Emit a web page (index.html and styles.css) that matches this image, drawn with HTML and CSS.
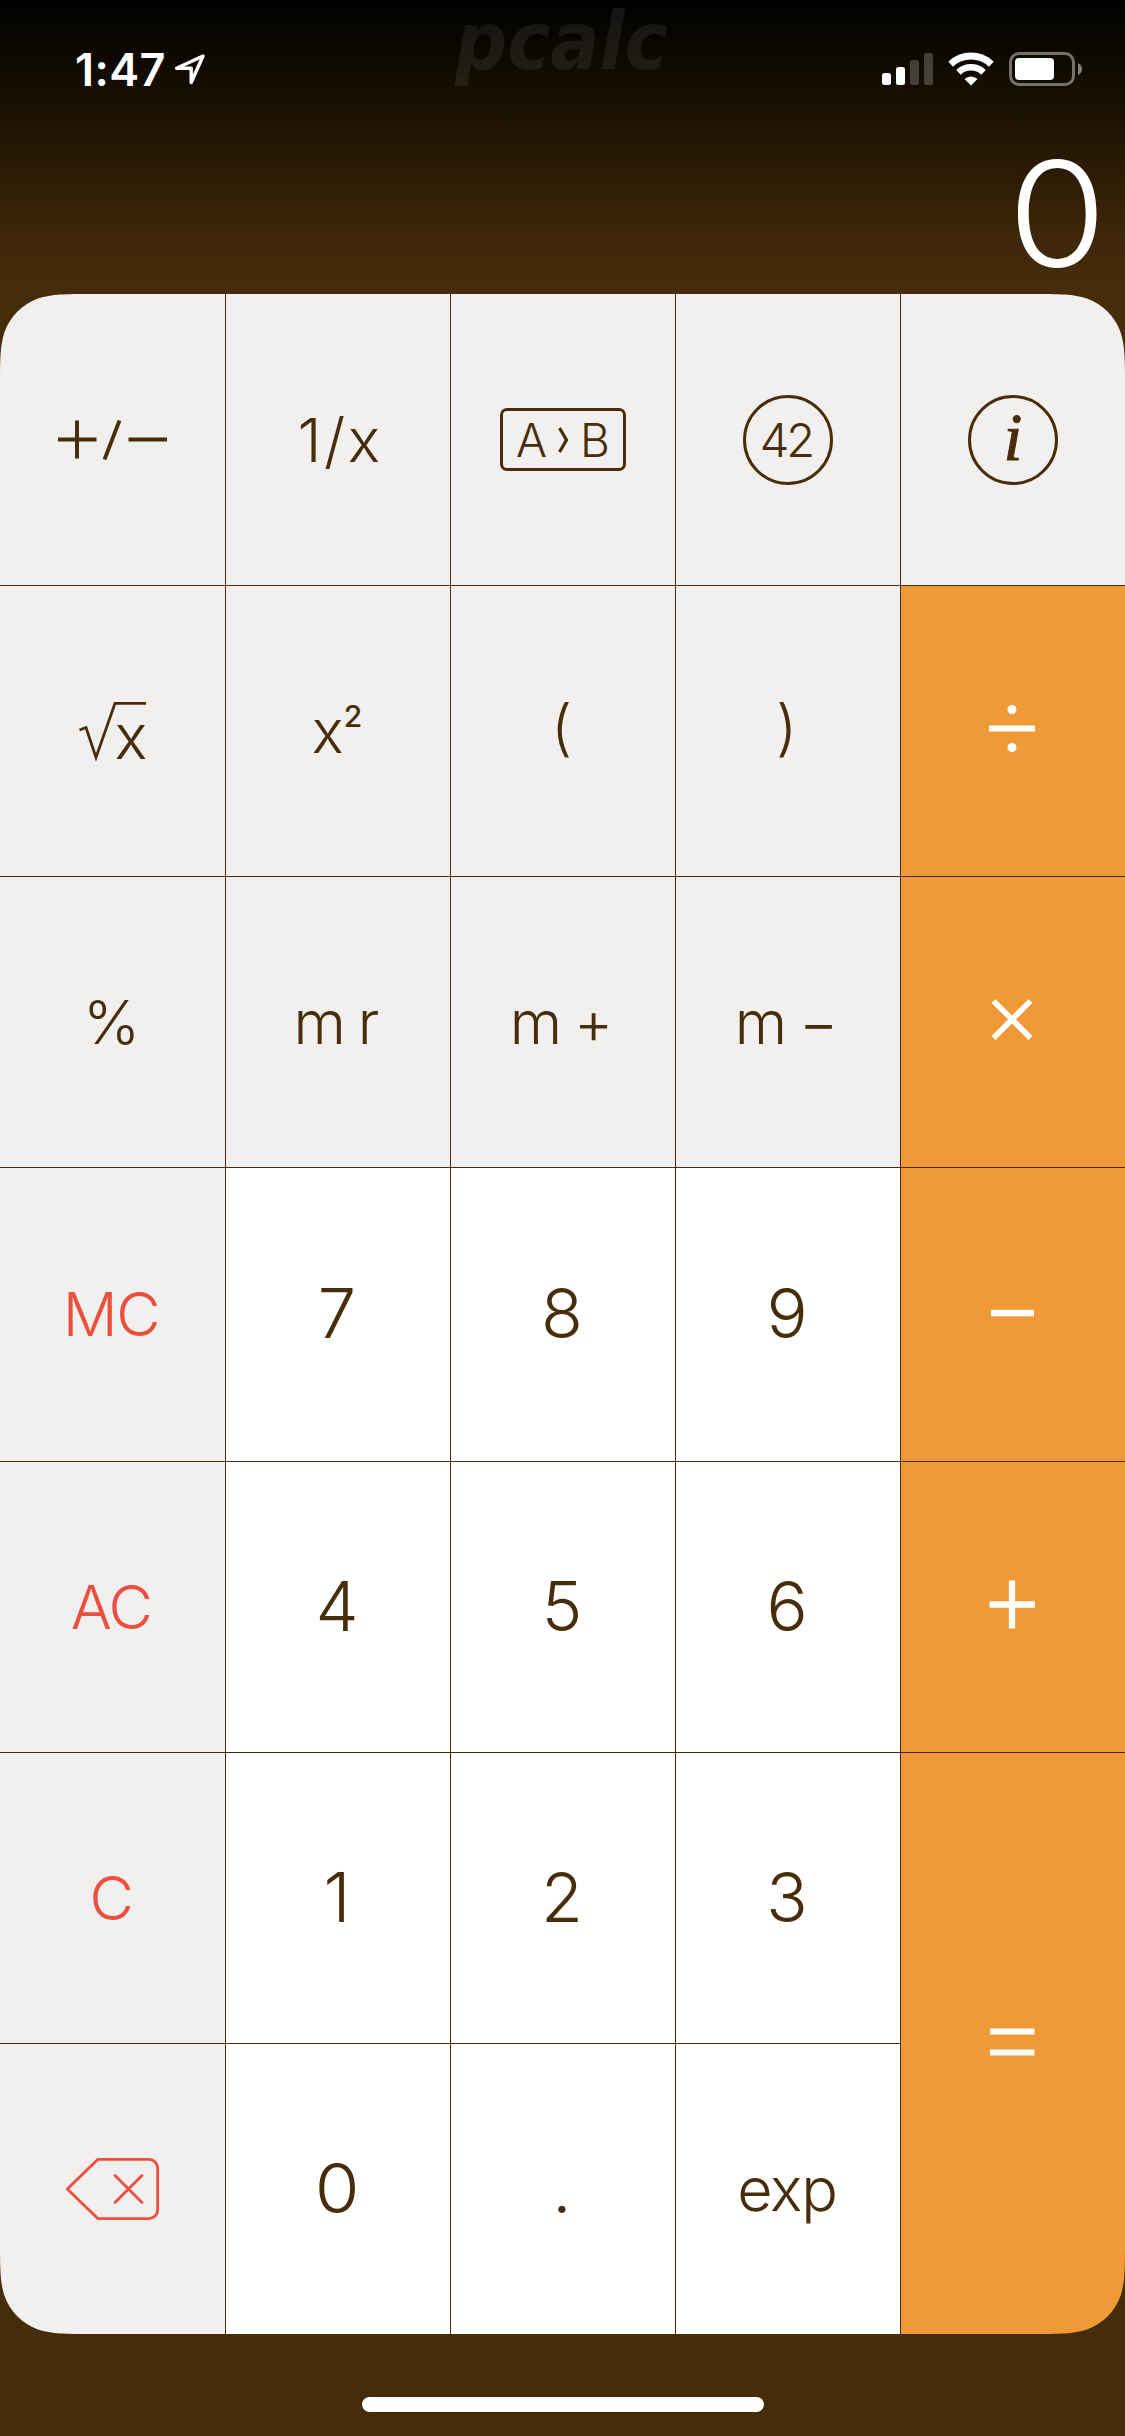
FILE: index.html
```html
<!DOCTYPE html>
<html lang="en">
<head>
<meta charset="utf-8">
<title>PCalc</title>
<link rel="stylesheet" href="styles.css">
</head>
<body>
<div class="screen">
  <header class="top">
    <div class="logo">pcalc</div>
    <div class="status">
      <div class="clock">
        <span class="time">1:47</span>
        <svg class="location" width="32" height="32" viewBox="0 0 32 32"><path d="M29 3 2.600 15.200H17.200V29.500Z" fill="none" stroke="#fff" stroke-width="3.400" stroke-linejoin="round"/></svg>
      </div>
      <div class="indicators">
        <svg width="51" height="32" viewBox="0 0 51 32" fill="#fff">
          <rect x="0" y="20" width="9" height="12" rx="2.500"/>
          <rect x="14" y="14" width="9" height="18" rx="2.500"/>
          <rect x="28" y="7" width="9" height="25" rx="2.500" opacity=".22"/>
          <rect x="42" y="0" width="9" height="32" rx="2.500" opacity=".22"/>
        </svg>
        <svg class="wifi" width="46" height="34" viewBox="0 0 46 34" fill="none" stroke="#fff">
          <path d="M2.700 12.200A29.500 29.500 0 0 1 43.300 12.200" stroke-width="7"/>
          <path d="M10.500 20.300A18 18 0 0 1 35.500 20.300" stroke-width="6.500"/>
          <path d="M16.500 27A9.500 9.500 0 0 1 29.500 27L23 33.500Z" fill="#fff" stroke="none"/>
        </svg>
        <svg width="73" height="34" viewBox="0 0 73 34">
          <rect x="1.500" y="1.500" width="63" height="31" rx="8.500" fill="none" stroke="#fff" stroke-opacity=".42" stroke-width="3"/>
          <rect x="6" y="6" width="39" height="22" rx="4" fill="#fff"/>
          <path d="M69 11Q73 13 73 17T69 23Z" fill="#fff" fill-opacity=".48"/>
        </svg>
      </div>
    </div>
    <div class="display">0</div>
  </header>

  <main class="keys">
    <div class="key">
      <svg width="109" height="40" viewBox="0 0 109 40" fill="none" stroke="currentColor" stroke-width="4"><path d="M0 19.500H38.500M19 .5V38.500M70.500 19.500H109"/><path d="M46.500 39.500 61.500.5" stroke-width="3.800"/></svg>
    </div>
    <div class="key inverse">1/x</div>
    <div class="key">
      <div class="convert"><span>A</span><svg width="11" height="26" viewBox="0 0 11 26" fill="none" stroke="currentColor" stroke-width="3.200"><path d="M1.500 1 8.500 13 1.500 25"/></svg><span>B</span></div>
    </div>
    <div class="key"><div class="ring number">42</div></div>
    <div class="key"><div class="ring info">i</div></div>

    <div class="key">
      <svg width="68" height="60" viewBox="0 0 68 60"><path d="M.5 29 7 26.500 17 56.500 36 2.300H67" fill="none" stroke="currentColor" stroke-width="2.800"/><text class="radicand" x="35.500" y="58">x</text></svg>
    </div>
    <div class="key"><span class="square">x<span class="power">2</span></span></div>
    <div class="key paren">(</div>
    <div class="key paren">)</div>
    <div class="key op"><svg width="48" height="48" viewBox="0 0 48 48"><path d="M0 21.500H46" stroke="#fff" stroke-width="6"/><circle cx="23" cy="2.500" r="4.500" fill="#fff"/><circle cx="23" cy="40.500" r="4.500" fill="#fff"/></svg></div>

    <div class="key percent">%</div>
    <div class="key spaced">m r</div>
    <div class="key spaced">m +</div>
    <div class="key spaced">m −</div>
    <div class="key op"><svg width="48" height="48" viewBox="0 0 48 48"><path d="M4.500 3 41.500 40M41.500 3 4.500 40" stroke="#fff" stroke-width="5.500"/></svg></div>

    <div class="key clear">MC</div>
    <div class="key digit">7</div>
    <div class="key digit">8</div>
    <div class="key digit">9</div>
    <div class="key op"><svg width="48" height="48" viewBox="0 0 48 48"><path d="M2 22H45" stroke="#fff" stroke-width="6.500"/></svg></div>

    <div class="key clear">AC</div>
    <div class="key digit">4</div>
    <div class="key digit">5</div>
    <div class="key digit">6</div>
    <div class="key op"><svg width="48" height="48" viewBox="0 0 48 48"><path d="M.5 21.500H46M23 -2.500V45.500" stroke="#fff" stroke-width="6.300"/></svg></div>

    <div class="key clear">C</div>
    <div class="key digit">1</div>
    <div class="key digit">2</div>
    <div class="key digit">3</div>
    <div class="key op equals"><svg width="48" height="48" viewBox="0 0 48 48"><path d="M1 11.500H45.500M1 32.500H45.500" stroke="#fff" stroke-width="6"/></svg></div>

    <div class="key erase">
      <svg width="93" height="62" viewBox="0 0 93 62" fill="none" stroke="currentColor" stroke-width="2.800" stroke-linejoin="round" stroke-linecap="round"><path d="M1.300 31 32 1.300H83A9 9 0 0 1 91.700 10V52A9 9 0 0 1 83 60.700H32ZM49 17.500 76 44.500M76 17.500 49 44.500"/></svg>
    </div>
    <div class="key digit"><span class="zero">0</span></div>
    <div class="key digit">.</div>
    <div class="key word">exp</div>
  </main>

  <footer class="bottom"><div class="home"></div></footer>
</div>
</body>
</html>
```
FILE: styles.css
```css
* {
  box-sizing: border-box;
}

body {
  margin: 0;
  background: #452c0b;
  font-family: Inter, "Liberation Sans", sans-serif;
}

svg {
  display: block;
  flex: none;
  overflow: visible;
}

.screen {
  width: 1125px;
  height: 2436px;
  display: flex;
  flex-direction: column;
  background: #452c0b;
}

.top {
  position: relative;
  height: 294px;
  background: linear-gradient(#000 0, #0c0800 50px, #201403 130px, #332006 200px, #402709 240px, #472c0b 294px);
  color: #fff;
}

/* Watermark behind the status bar */
.logo {
  position: absolute;
  top: 0;
  left: 455px;
  width: 224px;
  padding-right: 4px;
  font: italic bold 81px/82px "DejaVu Sans Condensed", "DejaVu Sans", sans-serif;
  font-stretch: condensed;
  color: rgba(255, 255, 255, .075);
}

.status {
  display: flex;
  justify-content: space-between;
  height: 138px;
  padding: 0 43px 0 75px;
}

.clock {
  display: flex;
  align-items: center;
  gap: 8px;
  height: 138px;
}

.time {
  font-size: 45px;
  font-weight: 600;
  line-height: 1;
  letter-spacing: .4px;
}

.indicators {
  display: flex;
  align-items: center;
  height: 138px;
}

.wifi {
  margin: 0 15px;
}

.display {
  height: 156px;
  padding-right: 20px;
  font-size: 147px;
  font-weight: 300;
  line-height: 152px;
  text-align: right;
  transform: scaleX(1.09);
  transform-origin: 1086px 50%;
}

.keys {
  display: grid;
  grid-template-columns: 225px repeat(4, 224px);
  grid-template-rows: 291px 290px 290px 293px 290px 290px 290px;
  gap: 1px;
  height: 2040px;
  background: #452c0b;
  clip-path: path("M0 91.720C0 65.310 0 52.100 4.490 37.890C10.140 22.370 22.370 10.140 37.890 4.490C52.100 0 65.310 0 91.720 0H1033.280C1059.690 0 1072.900 0 1087.110 4.490C1102.630 10.140 1114.860 22.370 1120.510 37.890C1125 52.100 1125 65.310 1125 91.720V1948.280C1125 1974.690 1125 1987.900 1120.510 2002.110C1114.860 2017.630 1102.630 2029.860 1087.110 2035.510C1072.900 2040 1059.690 2040 1033.280 2040H91.720C65.310 2040 52.100 2040 37.890 2035.510C22.370 2029.860 10.140 2017.630 4.490 2002.110C0 1987.900 0 1974.690 0 1948.280Z");
}

.key {
  display: flex;
  align-items: center;
  justify-content: center;
  background: #f2f0ee;
  color: #482d0b;
  font-size: 61px;
  font-weight: 330;
  line-height: 1;
}

.inverse {
  padding: 2px 0 0 4px;
  letter-spacing: 2.500px;
}

.digit,
.word {
  background: #fff;
}

.digit {
  padding-right: 2px;
  font-size: 68.500px;
}

.zero {
  transform: scaleX(1.06);
}

.clear,
.erase {
  color: #eb4f3e;
}

.clear {
  padding-right: 3px;
  letter-spacing: -1.500px;
}

.word {
  padding-right: 2px;
  letter-spacing: -1.200px;
}

.op {
  background: #f09a37;
}

.equals {
  grid-row: 6 / span 2;
  grid-column: 5;
}

.paren {
  padding: 0 3px 7px 0;
}

.percent {
  padding-right: 2px;
}

.spaced {
  padding-right: 3px;
  font-size: 60px;
  word-spacing: -5px;
}

.convert {
  display: flex;
  align-items: center;
  justify-content: center;
  gap: 11px;
  width: 126px;
  height: 63px;
  border: 3px solid;
  border-radius: 7px;
  font-size: 46px;
  font-weight: 300;
}

.ring {
  display: flex;
  align-items: center;
  justify-content: center;
  width: 90px;
  height: 90px;
  border: 3px solid;
  border-radius: 50%;
}

.number {
  padding-right: 4px;
  font-size: 47px;
  font-weight: 300;
  letter-spacing: -3px;
}

.info {
  font-family: "Liberation Serif", serif;
  font-style: italic;
  font-size: 68px;
  padding-bottom: 5px;
  -webkit-text-stroke: 1px;
}

.radicand {
  font-size: 62px;
  fill: currentColor;
}

.square {
  display: flex;
  padding-right: 2px;
  font-size: 60px;
}

.power {
  font-size: 30px;
  font-weight: 450;
}

.bottom {
  display: flex;
  justify-content: center;
  padding-top: 63px;
}

.home {
  width: 402px;
  height: 15px;
  border-radius: 8px;
  background: #fff;
}
```
